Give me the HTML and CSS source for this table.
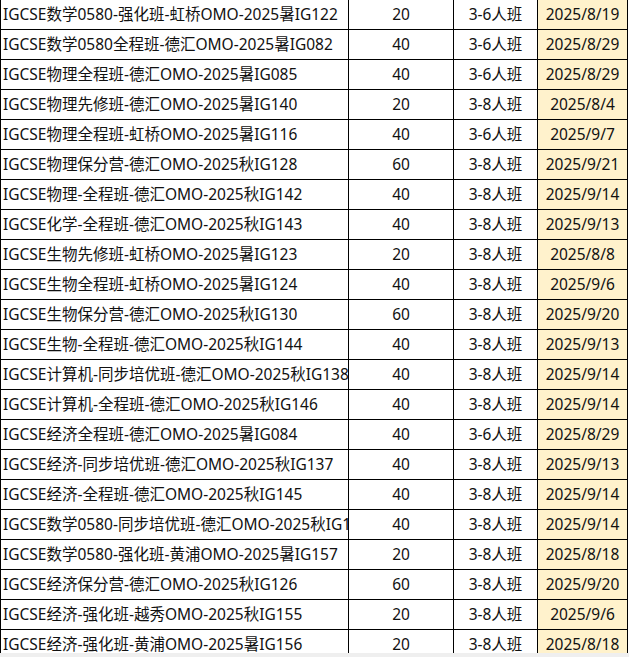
FILE: index.html
```html
<!DOCTYPE html>
<html lang="zh-CN">
<head>
<meta charset="utf-8">
<title>IGCSE 课程表</title>
<link rel="stylesheet" href="styles.css">
</head>
<body>
<div class="sheet">
  <div class="row"><div class="c name">IGCSE数学0580-强化班-虹桥OMO-2025暑IG122</div><div class="c">20</div><div class="c">3-6人班</div><div class="c date">2025/8/19</div></div>
  <div class="row"><div class="c name">IGCSE数学0580全程班-德汇OMO-2025暑IG082</div><div class="c">40</div><div class="c">3-6人班</div><div class="c date">2025/8/29</div></div>
  <div class="row"><div class="c name">IGCSE物理全程班-德汇OMO-2025暑IG085</div><div class="c">40</div><div class="c">3-6人班</div><div class="c date">2025/8/29</div></div>
  <div class="row"><div class="c name">IGCSE物理先修班-德汇OMO-2025暑IG140</div><div class="c">20</div><div class="c">3-8人班</div><div class="c date">2025/8/4</div></div>
  <div class="row"><div class="c name">IGCSE物理全程班-虹桥OMO-2025暑IG116</div><div class="c">40</div><div class="c">3-6人班</div><div class="c date">2025/9/7</div></div>
  <div class="row"><div class="c name">IGCSE物理保分营-德汇OMO-2025秋IG128</div><div class="c">60</div><div class="c">3-8人班</div><div class="c date">2025/9/21</div></div>
  <div class="row"><div class="c name">IGCSE物理-全程班-德汇OMO-2025秋IG142</div><div class="c">40</div><div class="c">3-8人班</div><div class="c date">2025/9/14</div></div>
  <div class="row"><div class="c name">IGCSE化学-全程班-德汇OMO-2025秋IG143</div><div class="c">40</div><div class="c">3-8人班</div><div class="c date">2025/9/13</div></div>
  <div class="row"><div class="c name">IGCSE生物先修班-虹桥OMO-2025暑IG123</div><div class="c">20</div><div class="c">3-8人班</div><div class="c date">2025/8/8</div></div>
  <div class="row"><div class="c name">IGCSE生物全程班-虹桥OMO-2025暑IG124</div><div class="c">40</div><div class="c">3-8人班</div><div class="c date">2025/9/6</div></div>
  <div class="row"><div class="c name">IGCSE生物保分营-德汇OMO-2025秋IG130</div><div class="c">60</div><div class="c">3-8人班</div><div class="c date">2025/9/20</div></div>
  <div class="row"><div class="c name">IGCSE生物-全程班-德汇OMO-2025秋IG144</div><div class="c">40</div><div class="c">3-8人班</div><div class="c date">2025/9/13</div></div>
  <div class="row"><div class="c name">IGCSE计算机-同步培优班-德汇OMO-2025秋IG138</div><div class="c">40</div><div class="c">3-8人班</div><div class="c date">2025/9/14</div></div>
  <div class="row"><div class="c name">IGCSE计算机-全程班-德汇OMO-2025秋IG146</div><div class="c">40</div><div class="c">3-8人班</div><div class="c date">2025/9/14</div></div>
  <div class="row"><div class="c name">IGCSE经济全程班-德汇OMO-2025暑IG084</div><div class="c">40</div><div class="c">3-6人班</div><div class="c date">2025/8/29</div></div>
  <div class="row"><div class="c name">IGCSE经济-同步培优班-德汇OMO-2025秋IG137</div><div class="c">40</div><div class="c">3-8人班</div><div class="c date">2025/9/13</div></div>
  <div class="row"><div class="c name">IGCSE经济-全程班-德汇OMO-2025秋IG145</div><div class="c">40</div><div class="c">3-8人班</div><div class="c date">2025/9/14</div></div>
  <div class="row"><div class="c name">IGCSE数学0580-同步培优班-德汇OMO-2025秋IG1</div><div class="c">40</div><div class="c">3-8人班</div><div class="c date">2025/9/14</div></div>
  <div class="row"><div class="c name">IGCSE数学0580-强化班-黄浦OMO-2025暑IG157</div><div class="c">20</div><div class="c">3-8人班</div><div class="c date">2025/8/18</div></div>
  <div class="row"><div class="c name">IGCSE经济保分营-德汇OMO-2025秋IG126</div><div class="c">60</div><div class="c">3-8人班</div><div class="c date">2025/9/20</div></div>
  <div class="row"><div class="c name">IGCSE经济-强化班-越秀OMO-2025秋IG155</div><div class="c">20</div><div class="c">3-8人班</div><div class="c date">2025/9/6</div></div>
  <div class="row"><div class="c name">IGCSE经济-强化班-黄浦OMO-2025暑IG156</div><div class="c">20</div><div class="c">3-8人班</div><div class="c date">2025/8/18</div></div>
</div>
<div class="strip"></div>
</body>
</html>
```
FILE: styles.css
```css
html, body {
  margin: 0;
  padding: 0;
  background: #ffffff;
}
body {
  width: 629px;
  height: 657px;
  overflow: hidden;
  font-family: "Noto Sans", "Noto Sans CJK SC", sans-serif;
  font-size: 15.5px;
  color: #111;
}
.sheet {
  height: 653px;
  overflow: hidden;
}
.row {
  display: grid;
  grid-template-columns: 348px 105px 84px 90px;
  width: 627px;
  border-left: 1px solid #000;
}
.c {
  box-sizing: border-box;
  height: 30px;
  line-height: 29px;
  border-right: 1px solid #000;
  border-bottom: 1px solid #000;
  text-align: center;
  white-space: nowrap;
  overflow: hidden;
}
.name {
  text-align: left;
  padding-left: 2px;
}
.date {
  background: #fff2cc;
}
.strip {
  height: 4px;
  background: #efefef;
}
```
